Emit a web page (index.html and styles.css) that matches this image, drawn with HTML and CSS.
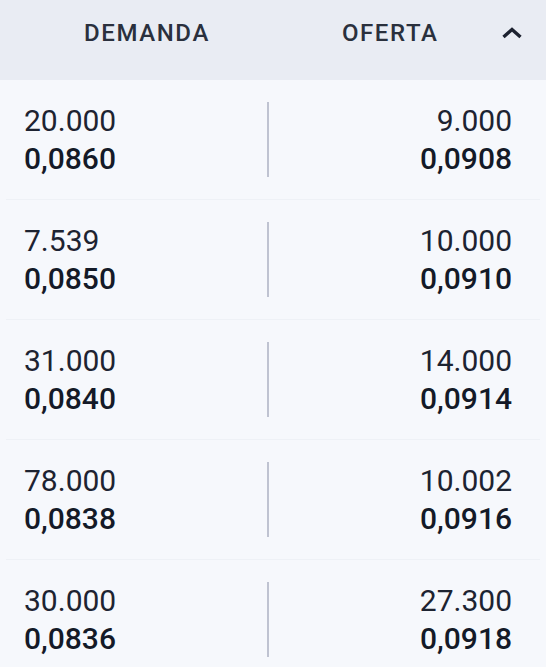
FILE: index.html
```html
<!DOCTYPE html>
<html lang="es">
<head>
<meta charset="utf-8">
<link rel="stylesheet" href="styles.css">
</head>
<body>
<div class="book">
  <div class="head">
    <span class="h-dem">DEMANDA</span>
    <span class="h-of">OFERTA</span>
    <svg class="chev" width="22" height="12" viewBox="0 0 22 12"><polyline points="2.5,10 11,2.5 19.5,10" fill="none" stroke="#1d2230" stroke-width="3.4" stroke-linejoin="miter"/></svg>
  </div>
  <div class="row">
    <div class="cell left"><span class="qty">20.000</span><span class="price">0,0860</span></div>
    <div class="div"></div>
    <div class="cell right"><span class="qty">9.000</span><span class="price">0,0908</span></div>
  </div>
  <div class="row">
    <div class="cell left"><span class="qty">7.539</span><span class="price">0,0850</span></div>
    <div class="div"></div>
    <div class="cell right"><span class="qty">10.000</span><span class="price">0,0910</span></div>
  </div>
  <div class="row">
    <div class="cell left"><span class="qty">31.000</span><span class="price">0,0840</span></div>
    <div class="div"></div>
    <div class="cell right"><span class="qty">14.000</span><span class="price">0,0914</span></div>
  </div>
  <div class="row">
    <div class="cell left"><span class="qty">78.000</span><span class="price">0,0838</span></div>
    <div class="div"></div>
    <div class="cell right"><span class="qty">10.002</span><span class="price">0,0916</span></div>
  </div>
  <div class="row">
    <div class="cell left"><span class="qty">30.000</span><span class="price">0,0836</span></div>
    <div class="div"></div>
    <div class="cell right"><span class="qty">27.300</span><span class="price">0,0918</span></div>
  </div>
</div>
</body>
</html>
```
FILE: styles.css
```css
html, body {
  margin: 0;
  padding: 0;
  background: #f6f8fc;
}
.book {
  width: 546px;
  font-family: Roboto, "Liberation Sans", sans-serif;
  color: #1d2331;
}
.head {
  height: 80px;
  box-sizing: border-box;
  padding-bottom: 14px;
  background: #e9ecf3;
  display: flex;
  align-items: center;
  color: #2a303d;
  font-size: 24px;
  font-weight: 500;
  letter-spacing: 1.6px;
}
.h-dem {
  margin-left: 84px;
}
.h-of {
  margin-left: 132px;
}
.chev {
  margin-left: 62px;
}
.row {
  height: 120px;
  box-sizing: border-box;
  display: flex;
  align-items: center;
  border-bottom: 1px solid #eef1f6;
  margin: 0 6px;
  padding-left: 18px;
  padding-right: 28px;
}
.cell {
  flex: 1;
  display: flex;
  flex-direction: column;
  font-size: 30px;
  line-height: 38px;
}
.left {
  align-items: flex-start;
}
.right {
  align-items: flex-end;
}
.qty {
  font-weight: 400;
}
.price {
  font-weight: 500;
  color: #141a28;
}
.div {
  width: 2px;
  height: 75px;
  background: #bfc3d1;
}
```
